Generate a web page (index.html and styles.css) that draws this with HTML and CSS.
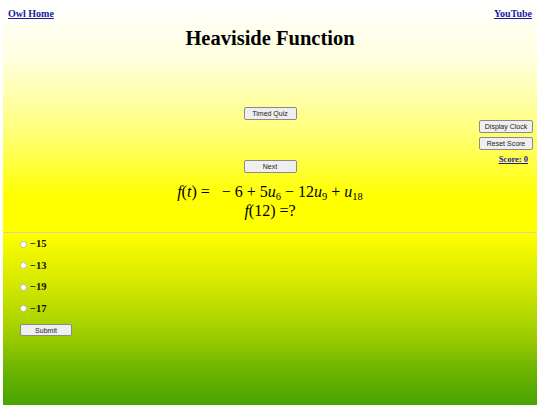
FILE: index.html
```html
<!DOCTYPE html>
<html>
<head>
<meta charset="utf-8">
<link rel="stylesheet" href="styles.css">
</head>
<body>
<div class="page">
  <div class="top">
    <div class="header">
      <a class="navlink" href="#">Owl Home</a>
      <a class="navlink" href="#">YouTube</a>
    </div>
    <h1 class="title">Heaviside Function</h1>
    <div class="controls">
      <div class="spacer"></div>
      <div class="center-col">
        <button class="btn btn-wide">Timed Quiz</button>
        <button class="btn btn-wide btn-next">Next</button>
      </div>
      <div class="right-col">
        <button class="btn btn-side">Display Clock</button>
        <button class="btn btn-side">Reset Score</button>
        <a class="score" href="#">Score: 0</a>
      </div>
    </div>
    <div class="formula">
      <div class="line1"><i>f</i>(<i>t</i>) =&nbsp;&nbsp; − 6 + 5<i>u</i><span class="sub">6</span> − 12<i>u</i><span class="sub">9</span> + <i>u</i><span class="sub">18</span></div>
      <div class="line2"><i>f</i>(12) =?</div>
    </div>
  </div>
  <div class="divider"></div>
  <div class="bottom">
    <div class="options">
      <label class="option"><span class="radio"></span><span class="ans">−15</span></label>
      <label class="option"><span class="radio"></span><span class="ans">−13</span></label>
      <label class="option"><span class="radio"></span><span class="ans">−19</span></label>
      <label class="option"><span class="radio"></span><span class="ans">−17</span></label>
    </div>
    <button class="btn btn-submit">Submit</button>
  </div>
</div>
</body>
</html>
```
FILE: styles.css
```css
html, body {
  margin: 0;
  padding: 0;
  background: #ffffff;
}
body {
  font-family: "Liberation Serif", "Times New Roman", serif;
  width: 540px;
  height: 405px;
  overflow: hidden;
}
.page {
  padding: 0 3px;
  display: flex;
  flex-direction: column;
  height: 405px;
}
.top {
  height: 232px;
  background: linear-gradient(to bottom, #ffffff 0%, #ffffe0 25%, #ffff80 55%, #ffff00 85%, #ffff00 100%);
  display: flex;
  flex-direction: column;
}
.header {
  display: flex;
  justify-content: space-between;
  padding: 8px 5px 0 5px;
}
.navlink {
  font-size: 10px;
  font-weight: bold;
  color: #1a1aa8;
  text-decoration: underline;
  line-height: 12px;
}
.title {
  margin: 6px 0 0 0;
  text-align: center;
  font-size: 20.5px;
  line-height: 24px;
  font-weight: bold;
  color: #000;
}
.controls {
  display: grid;
  grid-template-columns: 1fr auto 1fr;
  margin-top: 57px;
}
.center-col {
  display: flex;
  flex-direction: column;
  align-items: center;
}
.right-col {
  display: flex;
  flex-direction: column;
  align-items: flex-end;
  padding-top: 13px;
  padding-right: 4px;
}
.btn {
  font-family: "Liberation Sans", Arial, sans-serif;
  font-size: 7px;
  color: #222;
  background: #efefef;
  border: 1px solid #8a8a8a;
  border-radius: 2px;
  padding: 0;
  height: 13px;
  line-height: 11px;
}
.btn-wide {
  width: 53px;
}
.btn-next {
  margin-top: 40px;
}
.btn-side {
  width: 54px;
  margin-bottom: 4px;
}
.score {
  font-size: 8.5px;
  font-weight: bold;
  color: #1a1aa8;
  text-decoration: underline;
  margin-right: 5px;
  line-height: 10px;
}
.formula {
  margin-top: 9px;
  text-align: center;
  font-size: 16px;
  line-height: 19px;
  color: #000;
}
.sub {
  font-size: 10.5px;
  position: relative;
  top: 3px;
  line-height: 1;
}
.divider {
  height: 1px;
  background: #d6d68a;
}
.bottom {
  flex: 1;
  background: linear-gradient(to bottom, #ffff00 0%, #d4e800 30%, #9ccc00 60%, #6cb400 80%, #48a400 100%);
  padding: 5px 0 0 17px;
  display: flex;
  flex-direction: column;
  align-items: flex-start;
}
.options {
  display: flex;
  flex-direction: column;
  gap: 9px;
}
.option {
  display: flex;
  align-items: center;
  font-size: 10px;
  line-height: 12.5px;
  color: #111;
}
.radio {
  width: 5px;
  height: 5px;
  border-radius: 50%;
  background: #fff;
  border: 0.5px solid #bbb;
  margin: 0 3px 0 0;
}
.ans {
  font-size: 10.5px;
  font-weight: bold;
}
.btn-submit {
  width: 52px;
  height: 12px;
  margin-top: 9px;
}
```
